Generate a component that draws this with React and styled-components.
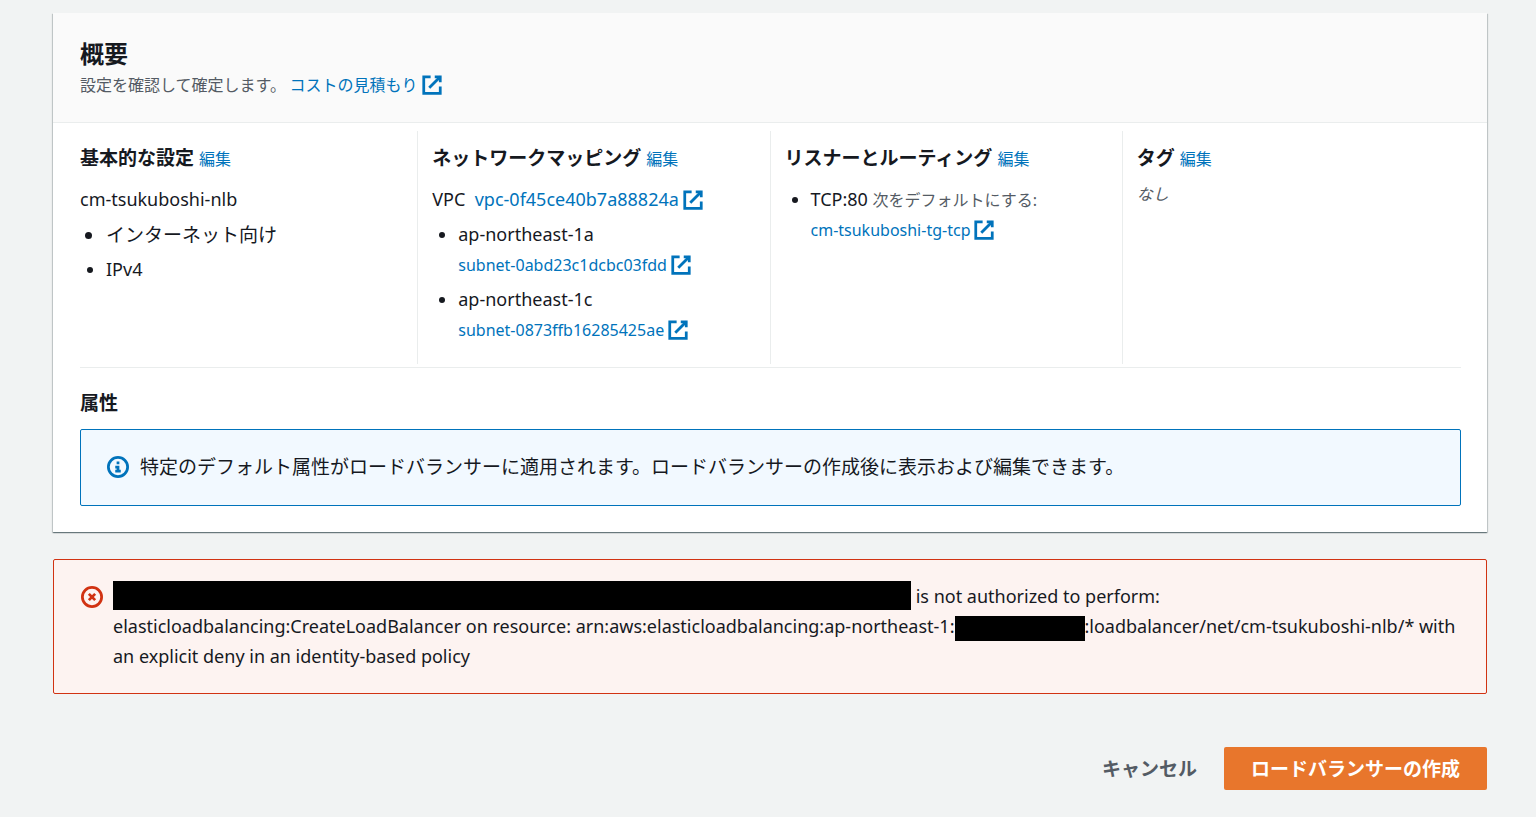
import styled, { createGlobalStyle, css } from 'styled-components';

const GlobalStyle = createGlobalStyle`
  * {
    box-sizing: border-box;
  }

  body {
    margin: 0;
    background: #f1f3f3;
    color: #16191f;
    font-family: 'Noto Sans', 'Noto Sans CJK JP', sans-serif;
    font-size: 18px;
    line-height: 30px;
  }
`;

const Page = styled.main`
  padding: 13px 49px 27px 53px;
`;

const Card = styled.section`
  background: #ffffff;
  box-shadow: 0 1px 1px 0 rgba(0, 28, 36, 0.4), 1px 1px 1px 0 rgba(0, 28, 36, 0.15),
    -1px 1px 1px 0 rgba(0, 28, 36, 0.15);
`;

const CardHeader = styled.header`
  padding: 24px 27px 23px;
  background: #fafafa;
  border-bottom: 1px solid #eaeded;
`;

const Title = styled.h2`
  margin: 0;
  font-family: 'Noto Sans CJK JP', sans-serif;
  font-size: 24px;
  line-height: 32px;
`;

const Description = styled.p`
  margin: 0;
  color: #545b64;
  font-family: 'Noto Sans CJK JP', sans-serif;
  font-size: 16px;
`;

const CardBody = styled.div`
  padding: 8px 26px 26px 27px;
`;

const Columns = styled.div`
  display: grid;
  grid-template-columns: repeat(4, 1fr);
  margin: 0 -14px;
`;

const Column = styled.div`
  min-height: 233px;
  padding: 11px 14px 16px;
  border-right: 1px solid #eaeded;

  &:last-child {
    border-right: none;
  }
`;

const SectionTitle = styled.h3`
  margin: 0;
  font-family: 'Noto Sans CJK JP', sans-serif;
  font-size: 19px;
`;

const SectionHead = styled.div`
  display: flex;
  align-items: baseline;
  gap: 5px;
  margin-bottom: 12px;
`;

const Link = styled.a`
  color: #0073bb;
  font-size: ${(props) => (props.$small ? '16px' : 'inherit')};
  line-height: 1;
  text-decoration: none;
  white-space: nowrap;

  &:hover {
    text-decoration: underline;
  }
`;

const iconBase = css`
  width: 22px;
  height: 22px;
  fill: none;
  stroke: currentColor;
  stroke-width: 2;
`;

const LinkIcon = styled.svg`
  ${iconBase}
  margin-left: 3px;
  vertical-align: -5px;
`;

const StatusIcon = styled.svg`
  ${iconBase}
  flex: none;
  margin-top: 5px;
`;

const Text = styled.p`
  margin: 0;
`;

const List = styled.ul`
  margin: 0;
  padding-left: 26px;
`;

const Item = styled.li`
  ${Text} + ${List} > & {
    margin-top: 5px;
  }
`;

const Japanese = styled.span`
  font-family: 'Noto Sans CJK JP', sans-serif;
  font-size: 19px;
`;

const JapaneseItem = styled(Item)`
  font-family: 'Noto Sans CJK JP', sans-serif;
  font-size: 19px;
`;

const Muted = styled.span`
  color: #545b64;
  font-size: 16px;
  line-height: 1;
`;

const Empty = styled.em`
  display: block;
  margin-top: -5px;
  color: #545b64;
  font-size: 16px;
`;

const Attributes = styled.div`
  margin-top: 3px;
  padding-top: 19px;
  border-top: 1px solid #eaeded;
`;

const Alert = styled.div`
  display: flex;
  border: 1px solid;
  border-radius: 2px;
`;

const InfoAlert = styled(Alert)`
  gap: 11px;
  margin-top: 12px;
  padding: 21px 26px 24px;
  background: #f2f9ff;
  border-color: #0073bb;

  ${StatusIcon} {
    color: #0073bb;
  }
`;

const ErrorAlert = styled(Alert)`
  gap: 10px;
  margin-top: 27px;
  padding: 21px 27px 22px;
  background: #fdf3f1;
  border-color: #d13212;

  ${StatusIcon} {
    color: #d13212;
  }
`;

const Line = styled.span`
  display: block;
  white-space: nowrap;
`;

const Redacted = styled.span`
  display: inline-block;
  width: ${(props) => (props.$long ? '798px' : '130px')};
  height: ${(props) => (props.$long ? '29px' : '25px')};
  background: #000000;
  vertical-align: ${(props) => (props.$long ? 'top' : 'middle')};
`;

const Actions = styled.div`
  display: flex;
  justify-content: flex-end;
  margin-top: 53px;
`;

const Button = styled.button`
  height: 43px;
  padding: 0 27px 2px;
  background: ${(props) => (props.$primary ? '#e8762c' : 'transparent')};
  border: none;
  border-radius: 2px;
  color: ${(props) => (props.$primary ? '#ffffff' : '#545b64')};
  font-family: 'Noto Sans CJK JP', sans-serif;
  font-size: 19px;
  font-weight: 700;
  cursor: pointer;
`;

const ExternalLink = ({ children, small }) => (
  <Link href="#" $small={small}>
    {children}
    <LinkIcon viewBox="0 0 16 16" aria-hidden="true">
      <path d="M10 2h4v4" />
      <path d="M6 10l8-8" />
      <path d="M14 9.048V14H2V2h5" />
    </LinkIcon>
  </Link>
);

const EditableHead = ({ title }) => (
  <SectionHead>
    <SectionTitle>{title}</SectionTitle>
    <Link href="#" $small>編集</Link>
  </SectionHead>
);

const subnets = [
  { zone: 'ap-northeast-1a', id: 'subnet-0abd23c1dcbc03fdd' },
  { zone: 'ap-northeast-1c', id: 'subnet-0873ffb16285425ae' }
];

const App = () => (
  <Page>
    <GlobalStyle />
    <Card>
      <CardHeader>
        <Title>概要</Title>
        <Description>
          設定を確認して確定します。 <ExternalLink small>コストの見積もり</ExternalLink>
        </Description>
      </CardHeader>

      <CardBody>
        <Columns>
          <Column>
            <EditableHead title="基本的な設定" />
            <Text>cm-tsukuboshi-nlb</Text>
            <List>
              <JapaneseItem>インターネット向け</JapaneseItem>
              <Item>IPv4</Item>
            </List>
          </Column>
          <Column>
            <EditableHead title="ネットワークマッピング" />
            <Text>
              VPC&nbsp; <ExternalLink>vpc-0f45ce40b7a88824a</ExternalLink>
            </Text>
            <List>
              {subnets.map((subnet) => (
                <Item key={subnet.id}>
                  {subnet.zone}
                  <br />
                  <ExternalLink small>{subnet.id}</ExternalLink>
                </Item>
              ))}
            </List>
          </Column>
          <Column>
            <EditableHead title="リスナーとルーティング" />
            <List>
              <Item>
                TCP:80 <Muted>次をデフォルトにする:</Muted>
                <br />
                <ExternalLink small>cm-tsukuboshi-tg-tcp</ExternalLink>
              </Item>
            </List>
          </Column>
          <Column>
            <EditableHead title="タグ" />
            <Empty>なし</Empty>
          </Column>
        </Columns>

        <Attributes>
          <SectionTitle>属性</SectionTitle>
          <InfoAlert role="status">
            <StatusIcon viewBox="0 0 16 16" aria-hidden="true">
              <circle cx="8" cy="8" r="7" />
              <path d="M8 11V8H6M10 11H6M8 4v2" />
            </StatusIcon>
            <Japanese>
              特定のデフォルト属性がロードバランサーに適用されます。ロードバランサーの作成後に表示および編集できます。
            </Japanese>
          </InfoAlert>
        </Attributes>
      </CardBody>
    </Card>

    <ErrorAlert role="alert">
      <StatusIcon viewBox="0 0 16 16" aria-hidden="true">
        <circle cx="8" cy="8" r="7" />
        <path d="M10.286 5.714l-4.572 4.572M5.714 5.714l4.572 4.572" />
      </StatusIcon>
      <Text>
        <Line>
          <Redacted $long /> is not authorized to perform:
        </Line>
        <Line>
          elasticloadbalancing:CreateLoadBalancer on resource: arn:aws:elasticloadbalancing:ap-northeast-1:
          <Redacted />
          :loadbalancer/net/cm-tsukuboshi-nlb/* with
        </Line>
        <Line>an explicit deny in an identity-based policy</Line>
      </Text>
    </ErrorAlert>

    <Actions>
      <Button type="button">キャンセル</Button>
      <Button type="button" $primary>ロードバランサーの作成</Button>
    </Actions>
  </Page>
);

export default App;
